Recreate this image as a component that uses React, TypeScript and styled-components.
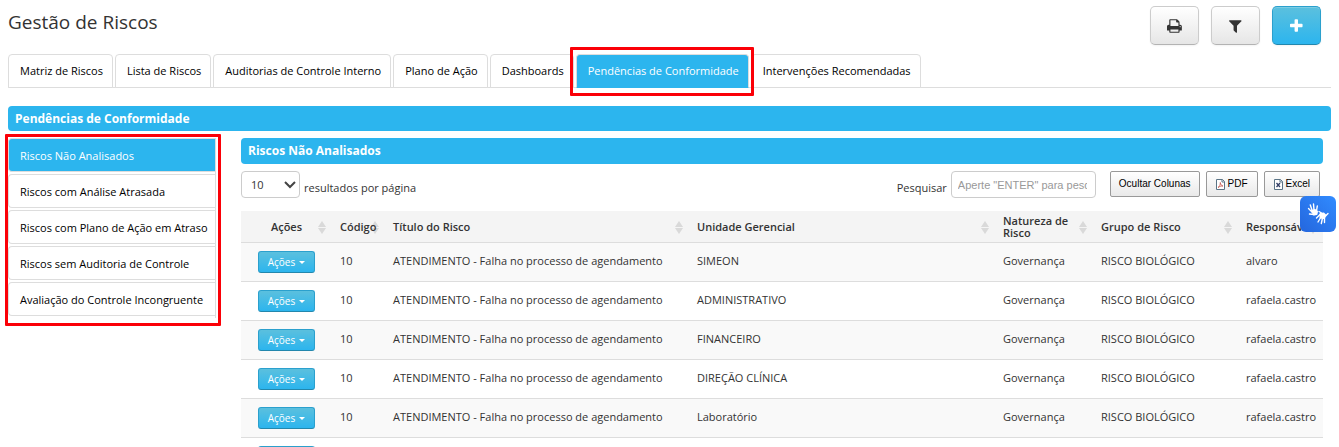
import React from 'react';
import styled, { createGlobalStyle, css } from 'styled-components';

const BLUE = '#2cb5ee';
const RED = '#fb0007';

const GlobalStyle = createGlobalStyle`
  *, *::before, *::after { box-sizing: border-box; }
  html { scrollbar-width: none; }
  body {
    margin: 0;
    background: #fff;
    color: #333;
    font: 11px/20px "Open Sans", sans-serif;
  }
  button, input, select { font: inherit; color: inherit; margin: 0; }
`;

const Page = styled.div`
  padding: 0 8px;
`;

const Header = styled.header`
  display: flex;
  justify-content: space-between;
  align-items: flex-start;
  height: 54px;
  padding: 6px 10px 0 0;
`;

const Title = styled.h1`
  margin: 0;
  font-size: 19px;
  line-height: 32px;
  font-weight: 400;
`;

const Toolbar = styled.div`
  display: flex;
  gap: 12px;
`;

const ToolButton = styled.button<{ $primary?: boolean }>`
  display: flex;
  align-items: center;
  justify-content: center;
  width: 49px;
  height: 39px;
  padding: 0;
  border: 1px solid #ccc;
  border-bottom-color: #b3b3b3;
  border-radius: 5px;
  color: #333;
  background: linear-gradient(#fff, #e6e6e6);
  box-shadow: inset 0 1px 0 rgba(255, 255, 255, 0.2), 0 1px 2px rgba(0, 0, 0, 0.05);
  ${p =>
    p.$primary &&
    css`
      border-color: #2ba0cd;
      border-bottom-color: #2387ad;
      color: #fff;
      background: linear-gradient(#5bc0de, #2cb5ee);
    `}
`;

const Glyph = styled.svg`
  display: block;
  height: 16px;
  fill: currentColor;
`;

const markBox = css`
  position: relative;
  &::after {
    content: '';
    position: absolute;
    border: 3px solid ${RED};
    border-radius: 1px;
    pointer-events: none;
    z-index: 2;
  }
`;

const Tabs = styled.nav`
  display: flex;
  gap: 2px;
  border-bottom: 1px solid #ddd;
`;

const TabSlot = styled.div<{ $marked?: boolean }>`
  margin-bottom: -1px;
  ${p =>
    p.$marked &&
    css`
      ${markBox}
      &::after { inset: -7px -5px -8px -6px; }
    `}
`;

const Tab = styled.a<{ $active?: boolean }>`
  display: block;
  padding: 6px 9px 6px 11px;
  border: 1px solid #ddd;
  border-bottom-color: ${p => (p.$active ? BLUE : '#ddd')};
  border-radius: 4px 4px 0 0;
  color: ${p => (p.$active ? '#fff' : '#000')};
  background: ${p => (p.$active ? BLUE : '#fff')};
  text-decoration: none;
  white-space: nowrap;
`;

const Banner = styled.h2<{ $inner?: boolean }>`
  margin: ${p => (p.$inner ? '0' : '18px 0 7px')};
  padding: 0 7px;
  border-radius: 4px;
  background: ${BLUE};
  color: #fff;
  font-size: 12px;
  line-height: ${p => (p.$inner ? 26 : 25)}px;
  font-weight: 700;
`;

const Columns = styled.div`
  display: flex;
  align-items: flex-start;
  gap: 25px;
`;

const SideNav = styled.nav`
  flex: 0 0 208px;
  min-width: 0;
  display: flex;
  flex-direction: column;
  gap: 2px;
  padding-bottom: 2px;
  border-right: 1px solid #ddd;
  ${markBox}
  &::after { inset: -4px -6px -8px -3px; }
`;

const SideLink = styled.a<{ $active?: boolean }>`
  display: block;
  padding: 7px 6px 5px 11px;
  border: 1px solid #ddd;
  border-right: 0;
  border-radius: 4px 0 0 4px;
  color: ${p => (p.$active ? '#fff' : '#000')};
  background: ${p => (p.$active ? BLUE : '#fff')};
  text-decoration: none;
  white-space: nowrap;
`;

const Main = styled.main`
  flex: 1;
  min-width: 0;
  padding-right: 8px;
`;

const Controls = styled.div`
  display: flex;
  justify-content: space-between;
  padding: 7px 3px 13px 0;
`;

const Field = styled.label`
  display: flex;
  gap: 4px;
`;

const FieldText = styled.span`
  padding-top: 7px;
`;

const SelectWrap = styled.span`
  position: relative;
  display: block;
  height: 27px;
  svg {
    position: absolute;
    right: 4px;
    top: 10px;
    pointer-events: none;
  }
`;

const PageSize = styled.select`
  appearance: none;
  display: block;
  width: 59px;
  height: 27px;
  padding: 0 9px;
  border: 1px solid #ccc;
  border-radius: 4px;
  background: #fff;
`;

const Search = styled.input`
  width: 145px;
  height: 27px;
  padding: 0 8px 0 6px;
  border: 1px solid #ccc;
  border-radius: 4px;
  font-family: "Liberation Sans", Arial, sans-serif;
  &::placeholder { color: #999; opacity: 1; }
`;

const RightControls = styled.div`
  display: flex;
  gap: 14px;
`;

const Exports = styled.div`
  display: flex;
  gap: 6px;
`;

const ExportButton = styled.button<{ $textOnly?: boolean }>`
  display: flex;
  align-items: center;
  gap: 3px;
  height: 26px;
  padding: 0 ${p => (p.$textOnly ? 8 : 9)}px;
  border: 1px solid #999;
  border-radius: 2px;
  color: #000;
  background: linear-gradient(#fff, #e9e9e9);
  font-family: "Liberation Sans", Arial, sans-serif;
  font-size: 10px;
  white-space: nowrap;
`;

const Table = styled.table`
  width: 100%;
  table-layout: fixed;
  border-collapse: separate;
  border-spacing: 0;
`;

const Col = styled.col<{ $w?: string }>`
  width: ${p => p.$w || 'auto'};
`;

const Th = styled.th<{ $center?: boolean }>`
  height: 32px;
  padding: 0 20px 0 ${p => (p.$center ? 20 : 8)}px;
  border-bottom: 1px solid #ddd;
  background: #f4f4f4;
  text-align: ${p => (p.$center ? 'center' : 'left')};
  line-height: 12px;
  font-weight: 600;
`;

const HeadCell = styled.div`
  position: relative;
  z-index: 0;
  svg {
    position: absolute;
    right: -14px;
    top: calc(50% - 6px);
    z-index: -1;
  }
`;

const Td = styled.td<{ $center?: boolean }>`
  height: 39px;
  padding: 0 8px ${p => (p.$center ? 0 : 2)}px;
  border-bottom: 1px solid #ddd;
  text-align: ${p => (p.$center ? 'center' : 'left')};
  white-space: nowrap;
`;

const Row = styled.tr`
  &:nth-child(odd) { background: #f9f9f9; }
`;

const ActionButton = styled.button`
  display: inline-flex;
  align-items: center;
  gap: 4px;
  height: 22px;
  padding: 0 9px;
  border: 1px solid #2ba0cd;
  border-bottom-color: #2387ad;
  border-radius: 3px;
  color: #fff;
  background: linear-gradient(#5bc0de, #2cb5ee);
  font-size: 10px;
  vertical-align: middle;
`;

const Widget = styled.button`
  position: fixed;
  top: 196px;
  right: 3px;
  display: flex;
  align-items: center;
  justify-content: center;
  width: 36px;
  height: 36px;
  padding: 0;
  border: 0;
  border-radius: 6px;
  color: #fff;
  background: linear-gradient(45deg, #2466dd, #318bff);
`;

const tabs = [
  'Matriz de Riscos',
  'Lista de Riscos',
  'Auditorias de Controle Interno',
  'Plano de Ação',
  'Dashboards',
  'Pendências de Conformidade',
  'Intervenções Recomendadas',
];

const sections = [
  'Riscos Não Analisados',
  'Riscos com Análise Atrasada',
  'Riscos com Plano de Ação em Atraso',
  'Riscos sem Auditoria de Controle',
  'Avaliação do Controle Incongruente',
];

const columns = [
  { label: 'Ações', w: '91px' },
  { label: 'Código', w: '53px' },
  { label: 'Título do Risco', w: '304px' },
  { label: 'Unidade Gerencial' },
  { label: 'Natureza de Risco', w: '98px' },
  { label: 'Grupo de Risco', w: '145px' },
  { label: 'Responsável', w: '85px' },
];

const rows = [
  ['SIMEON', 'alvaro'],
  ['ADMINISTRATIVO', 'rafaela.castro'],
  ['FINANCEIRO', 'rafaela.castro'],
  ['DIREÇÃO CLÍNICA', 'rafaela.castro'],
  ['Laboratório', 'rafaela.castro'],
  ['Laboratório', 'rafaela.castro'],
];

const PrintIcon = () => (
  <Glyph viewBox="0 0 1664 1792">
    <path d="M384 1536h896v-256h-896v256zM384 896h896v-384h-160q-40 0-68-28t-28-68v-160h-640v640zM1536 960q0-26-19-45t-45-19-45 19-19 45 19 45 45 19 45-19 19-45zM1664 960v416q0 13-9.5 22.5t-22.5 9.5h-224v160q0 40-28 68t-68 28h-960q-40 0-68-28t-28-68v-160h-224q-13 0-22.5-9.5t-9.5-22.5v-416q0-79 56.5-135.5t135.5-56.5h64v-544q0-40 28-68t68-28h672q40 0 88 20t76 48l152 152q28 28 48 76t20 88v256h64q79 0 135.5 56.5t56.5 135.5z" />
  </Glyph>
);

const FilterIcon = () => (
  <Glyph viewBox="0 0 1408 1792">
    <path d="M1403 295q17 41-14 70l-493 493v742q0 42-39 59-13 5-25 5-27 0-45-19l-256-256q-19-19-19-45v-486l-493-493q-31-29-14-70 17-39 59-39h1280q42 0 59 39z" />
  </Glyph>
);

const PlusIcon = () => (
  <Glyph viewBox="0 0 1408 1792">
    <path d="M1408 736v192q0 40-28 68t-68 28h-416v416q0 40-28 68t-68 28h-192q-40 0-68-28t-28-68v-416h-416q-40 0-68-28t-28-68v-192q0-40 28-68t68-28h416v-416q0-40 28-68t68-28h192q40 0 68 28t28 68v416h416q40 0 68 28t28 68z" />
  </Glyph>
);

const SortIcon = () => (
  <svg width="8" height="13" viewBox="0 0 8 13" fill="#d9d9d9" aria-hidden="true">
    <path d="M4 0l4 6H0zM4 13l4-6H0z" />
  </svg>
);

const PdfIcon = () => (
  <svg width="9" height="11" viewBox="0 0 9 11" fill="none" aria-hidden="true">
    <path d="M.5.5h6l2 2v8h-8z" fill="#fff" stroke="#5b7486" />
    <path d="M6 .5v2.500h2.500" stroke="#5b7486" />
    <path d="M2 8.500c1.500-.7 2.500-3 2.300-5 .2 2 1.200 3.300 2.700 3.500-1.700-.1-3.500.4-5 1.500z" stroke="#c4564e" strokeWidth=".8" />
  </svg>
);

const ExcelIcon = () => (
  <svg width="9" height="11" viewBox="0 0 9 11" fill="none" aria-hidden="true">
    <path d="M.5.5h6l2 2v8h-8z" fill="#fff" stroke="#5b7486" />
    <path d="M6 .5v2.500h2.500" stroke="#5b7486" />
    <path d="M2.500 4l3.500 4M6 4L2.500 8" stroke="#333f66" strokeWidth="1.300" />
  </svg>
);

const HandsIcon = () => (
  <svg width="22" height="24" viewBox="0 0 22 24" fill="none" stroke="#fff" strokeLinecap="round" strokeLinejoin="round" aria-hidden="true">
    <path d="M5 9l3-1 2 1.500-.5 2.500-2.500.5z" fill="#fff" strokeWidth="2" />
    <path d="M5 10L1.500 6.500M5 8L3.300 3M7 8L6.500 2M9.500 9l.8-5M7 12.500l-4.500-.5" strokeWidth="1.400" />
    <path d="M13.500 12l3-.5 2 2-1.500 2.500-3.500-.5z" fill="#fff" strokeWidth="2" />
    <path d="M13 12.500L9.500 16M14 15l-3 5M15.500 16l-1.200 5.500M17.500 16l0 4.500M14.500 11l-2.500-1.500M19 13.500l2-2" strokeWidth="1.400" />
  </svg>
);

export default function App() {
  return (
    <>
      <GlobalStyle />
      <Page>
        <Header>
          <Title>Gestão de Riscos</Title>
          <Toolbar>
            <ToolButton aria-label="Imprimir"><PrintIcon /></ToolButton>
            <ToolButton aria-label="Filtrar"><FilterIcon /></ToolButton>
            <ToolButton $primary aria-label="Adicionar"><PlusIcon /></ToolButton>
          </Toolbar>
        </Header>
        <Tabs>
          {tabs.map(t => {
            const active = t === 'Pendências de Conformidade';
            return (
              <TabSlot key={t} $marked={active}>
                <Tab href="#" $active={active}>{t}</Tab>
              </TabSlot>
            );
          })}
        </Tabs>
        <Banner>Pendências de Conformidade</Banner>
        <Columns>
          <SideNav>
            {sections.map((s, i) => (
              <SideLink key={s} href="#" $active={i === 0}>{s}</SideLink>
            ))}
          </SideNav>
          <Main>
            <Banner $inner>Riscos Não Analisados</Banner>
            <Controls>
              <Field>
                <SelectWrap>
                  <PageSize defaultValue="10">
                    <option>10</option>
                    <option>25</option>
                    <option>50</option>
                  </PageSize>
                  <svg width="12" height="8" viewBox="0 0 12 8" fill="none" stroke="#444" strokeWidth="2">
                    <path d="M1 1l5 5 5-5" />
                  </svg>
                </SelectWrap>
                <FieldText>resultados por página</FieldText>
              </Field>
              <RightControls>
                <Field>
                  <FieldText>Pesquisar</FieldText>
                  <Search type="text" placeholder={'Aperte "ENTER" para pesquisar'} />
                </Field>
                <Exports>
                  <ExportButton $textOnly>Ocultar Colunas</ExportButton>
                  <ExportButton><PdfIcon />PDF</ExportButton>
                  <ExportButton><ExcelIcon />Excel</ExportButton>
                </Exports>
              </RightControls>
            </Controls>
            <Table>
              <colgroup>
                {columns.map(c => <Col key={c.label} $w={c.w} />)}
              </colgroup>
              <thead>
                <tr>
                  {columns.map((c, i) => (
                    <Th key={c.label} $center={i === 0}>
                      <HeadCell>{c.label}<SortIcon /></HeadCell>
                    </Th>
                  ))}
                </tr>
              </thead>
              <tbody>
                {rows.map(([unit, owner], i) => (
                  <Row key={i}>
                    <Td $center>
                      <ActionButton>
                        Ações
                        <svg width="6" height="3" viewBox="0 0 6 3" fill="#fff"><path d="M0 0h6L3 3z" /></svg>
                      </ActionButton>
                    </Td>
                    <Td>10</Td>
                    <Td>ATENDIMENTO - Falha no processo de agendamento</Td>
                    <Td>{unit}</Td>
                    <Td>Governança</Td>
                    <Td>RISCO BIOLÓGICO</Td>
                    <Td>{owner}</Td>
                  </Row>
                ))}
              </tbody>
            </Table>
          </Main>
        </Columns>
      </Page>
      <Widget aria-label="Libras"><HandsIcon /></Widget>
    </>
  );
}
